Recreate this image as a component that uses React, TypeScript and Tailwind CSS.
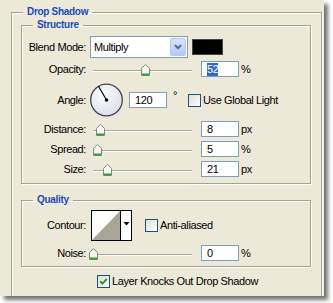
import React from 'react';

const Thumb = ({ x }: { x: number }) => (
  <svg className="absolute top-[2px]" style={{ left: x }} width="11" height="13" viewBox="0 0 11 13">
    <path d="M1.5 12.5 V5.5 L5.5 1.5 L9.5 5.5 V12.5 Z" fill="#f6f7f2" stroke="#7d8a7d" />
    <path d="M2 11.5 H9" stroke="#2e9e3a" strokeWidth="2" />
  </svg>
);

// track starts at page x=93, wrapper at x=88
const Slider = ({ pos }: { pos: number }) => (
  <div className="relative ml-[2px] h-[16px] w-[110px]">
    <div className="ml-[5px] mt-[9px] h-[2px] w-[99px] border-t border-[#a8a695] bg-white" />
    <Thumb x={pos - 88 - 5} />
  </div>
);

const Field = ({ children }: { children: React.ReactNode }) => (
  <div className="ml-[3px] flex h-[16px] w-[38px] items-center border border-[#7f9db9] bg-white pl-[5px]">
    {children}
  </div>
);

const Check = ({ checked }: { checked?: boolean }) => (
  <span className="flex h-[13px] w-[13px] shrink-0 items-center justify-center border border-[#1c5180] bg-linear-to-br from-[#dcdcd7] to-white">
    {checked && (
      <svg width="9" height="9" viewBox="0 0 9 9">
        <path d="M1.2 4.2 L3.5 6.6 L7.8 1.8" fill="none" stroke="#21a121" strokeWidth="2" />
      </svg>
    )}
  </span>
);

const Label = ({ children }: { children: React.ReactNode }) => (
  <span className="w-[64px] shrink-0 text-right">{children}</span>
);

const legend = 'ml-[11px] px-[4px] text-[10px] font-bold leading-[12px] tracking-[-0.3px] text-[#1a48b8]';
const etched = 'border border-[#a5a292] shadow-[inset_1px_1px_0_#fff,1px_1px_0_#fff]';

export default function App() {
  return (
    <div className="h-[303px] w-[333px] bg-white font-['Liberation_Sans',Arial,sans-serif] text-[11px] leading-[13px] tracking-[-0.4px] text-black">
      <div className="h-[296px] w-[324px] overflow-hidden bg-[#ece9d8] shadow-[4px_4px_4px_rgba(0,0,0,0.55)]">
        <fieldset className={`ml-[11px] mt-[6px] h-[310px] w-[311px] ${etched}`}>
          <legend className={legend}>Drop Shadow</legend>

          <fieldset className={`ml-[9px] mt-[1px] w-[290px] pb-[6px] ${etched}`}>
            <legend className={legend}>Structure</legend>

            <div className="mt-[5px] flex h-[22px] items-center">
              <Label>Blend Mode:</Label>
              <div className="ml-[4px] flex h-[22px] w-[98px] items-center border border-[#7f9db9] bg-white">
                <span className="flex-1 pl-[3px]">Multiply</span>
                <span className="mr-[1px] flex h-[18px] w-[16px] items-center justify-center rounded-[2px] border border-[#b4c8f6] bg-linear-to-b from-[#d7e2fd] to-[#b4c8f8]">
                  <svg width="8" height="6" viewBox="0 0 8 6">
                    <path d="M1 1.2 L4 4.2 L7 1.2" fill="none" stroke="#4d6185" strokeWidth="1.8" />
                  </svg>
                </span>
              </div>
              <span className="ml-[4px] h-[16px] w-[31px] border border-[#444] bg-black" />
            </div>

            <div className="mt-[3px] flex h-[16px] items-center">
              <Label>Opacity:</Label>
              <Slider pos={145} />
              <Field>
                <span className="bg-[#316ac5] text-white">52</span>
              </Field>
              <span className="ml-[2px]">%</span>
            </div>

            <div className="mt-[6px] flex h-[34px] items-center">
              <Label>Angle:</Label>
              <svg className="ml-[4px]" width="33" height="34" viewBox="0 0 33 34">
                <defs>
                  <radialGradient id="dial" cx="0.4" cy="0.35" r="0.7">
                    <stop offset="0" stopColor="#ffffff" />
                    <stop offset="1" stopColor="#d9dce8" />
                  </radialGradient>
                </defs>
                <circle cx="16.5" cy="17" r="15.8" fill="url(#dial)" stroke="#3e4459" strokeWidth="1.3" />
                <line x1="16.5" y1="17" x2="8.5" y2="3.2" stroke="#000" strokeWidth="1.2" />
                <circle cx="16.5" cy="17" r="1.8" fill="#000" />
              </svg>
              <div className="ml-[3px]">
                <Field>120</Field>
              </div>
              <span className="ml-[6px] self-start pt-[6px]">°</span>
              <span className="ml-[11px]">
                <Check />
              </span>
              <span className="ml-[2px]">Use Global Light</span>
            </div>

            <div className="mt-[4px] flex h-[16px] items-center">
              <Label>Distance:</Label>
              <Slider pos={100} />
              <Field>8</Field>
              <span className="ml-[2px]">px</span>
            </div>

            <div className="mt-[4px] flex h-[16px] items-center">
              <Label>Spread:</Label>
              <Slider pos={97} />
              <Field>5</Field>
              <span className="ml-[2px]">%</span>
            </div>

            <div className="mt-[4px] flex h-[16px] items-center">
              <Label>Size:</Label>
              <Slider pos={107} />
              <Field>21</Field>
              <span className="ml-[2px]">px</span>
            </div>
          </fieldset>

          <fieldset className={`ml-[9px] mt-[10px] w-[290px] pb-[5px] ${etched}`}>
            <legend className={legend}>Quality</legend>

            <div className="mt-[4px] flex h-[30px] items-center">
              <Label>Contour:</Label>
              <svg className="ml-[5px]" width="41" height="31" viewBox="0 0 41 31">
                <rect x="0.5" y="0.5" width="40" height="30" fill="#fff" stroke="#000" />
                <polygon points="1,30 29,1 29,30" fill="#a9a597" />
                <line x1="29.5" y1="0" x2="29.5" y2="31" stroke="#000" />
                <polygon points="32.5,12 38.5,12 35.5,15.5" fill="#000" />
              </svg>
              <span className="ml-[13px]">
                <Check />
              </span>
              <span className="ml-[2px]">Anti-aliased</span>
            </div>

            <div className="mt-[5px] flex h-[16px] items-center">
              <Label>Noise:</Label>
              <Slider pos={93} />
              <Field>0</Field>
              <span className="ml-[2px]">%</span>
            </div>
          </fieldset>

          <div className="ml-[85px] mt-[8px] flex h-[13px] items-center">
            <Check checked />
            <span className="ml-[2px]">Layer Knocks Out Drop Shadow</span>
          </div>
        </fieldset>
      </div>
    </div>
  );
}
